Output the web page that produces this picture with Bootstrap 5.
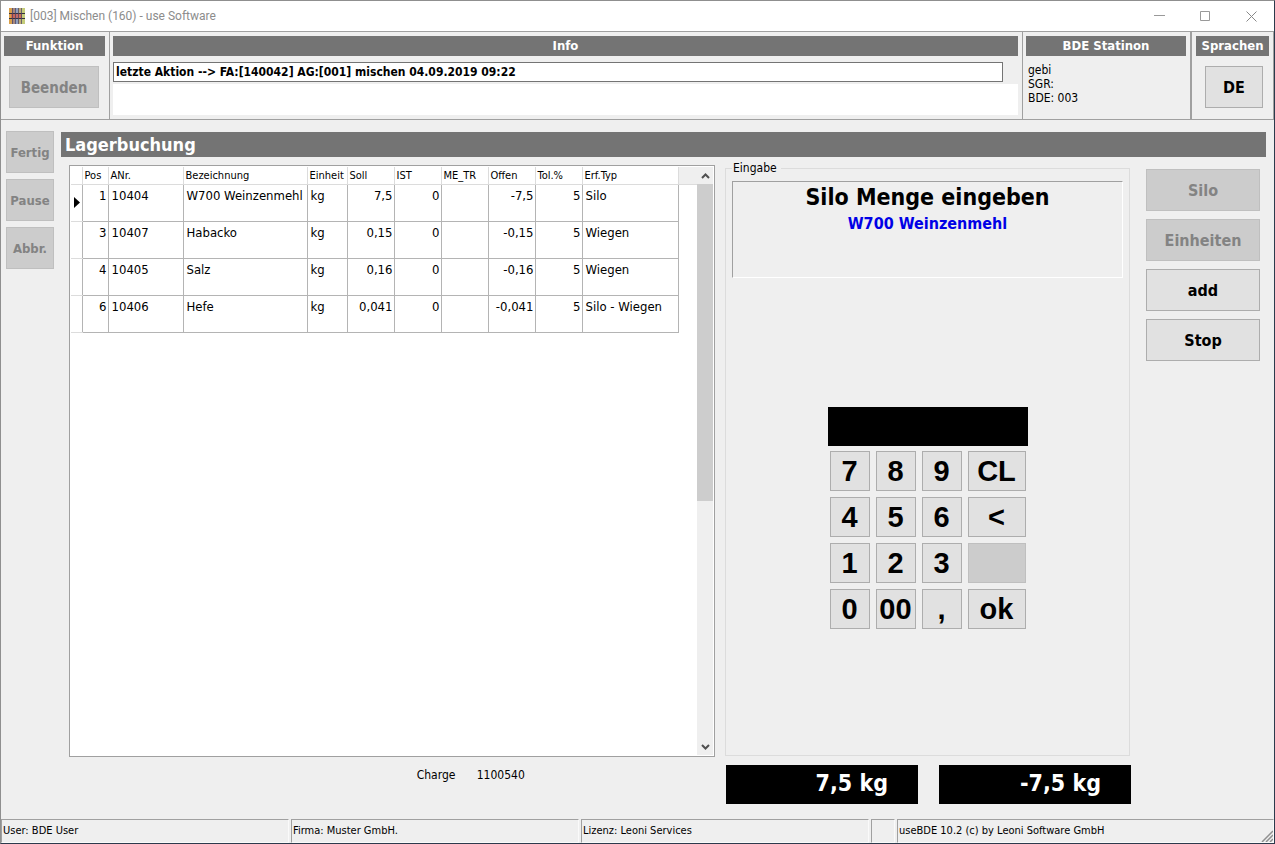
<!DOCTYPE html>
<html lang="de">
<head>
<meta charset="utf-8">
<meta name="viewport" content="width=device-width, initial-scale=1">
<title>[003] Mischen (160) - use Software</title>
<link href="https://cdn.jsdelivr.net/npm/bootstrap@5.3.0/dist/css/bootstrap.min.css" rel="stylesheet">
<style>
  body { font-family: "DejaVu Sans Condensed", "DejaVu Sans", sans-serif; font-size: 12px; line-height: 14px; color: #000; background: #efefef; }
  .app-window { border: 1px solid #8f8f8f; border-right-color: #2b3a4c; border-bottom-color: #2b3a4c; }
  .title-bar { height: 30px; background: #fff; color: #8c8c8c; font: 12px/16px Roboto, "Noto Sans", sans-serif; padding-left: 8px; }
  .title-text { margin-left: 5px; }
  .win-btn { width: 46px; height: 28px; }

  .top-band { display: grid; grid-template-columns: 109px minmax(0, 1fr) 169px 82px; border-top: 1px solid #a0a0a0; border-bottom: 1px solid #a0a0a0; }
  .top-cell { padding: 4px 4px 4px 3px; border-right: 1px solid #a0a0a0; }
  .top-cell.wide-rule { border-right-width: 2px; }
  .top-cell:last-child { padding-left: 4px; }
  .cap { background: #747474; color: #fff; font-weight: 700; font-size: 13px; line-height: 20px; text-align: center; }
  .key { background: #e1e1e1; border: 1px solid #adadad; border-radius: 0; color: #000; font-weight: 700; font-size: 16px; line-height: 20px; height: 42px; padding: 2px 0 0; }
  .key:hover { background: #e5f1fb; border-color: #0078d7; }
  .key:disabled { background: #ccc; border-color: #bfbfbf; color: #838383; opacity: 1; }
  .key-quit { width: 90px; margin: 10px 5px 7px; font-size: 15px; }
  .key-lang { width: 58px; margin: 10px 6px 7px auto; }
  .key-side { width: 48px; font-size: 13px; }
  .info-line { width: calc(100% - 15px); height: 20px; border: 1px solid #747474; color: #000; font-weight: 700; font-size: 12px; padding: 0 2px; margin-top: 6px; background: #fff; }
  .info-memo { height: 31px; border: 0; background: #fff; resize: none; margin-top: 2px; }
  .station { padding: 7px 2px 0; }

  .work { display: grid; grid-template-columns: 48px minmax(0, 1fr); column-gap: 7px; padding: 11px 8px 0 5px; }
  .side-keys { gap: 6px; }
  .heading { background: #747474; color: #fff; font-size: 18px; line-height: 25px; font-weight: 700; padding-left: 4px; margin: 1px 0 0; }
  .panes { display: grid; grid-template-columns: minmax(0, 1fr) 405px 130px; grid-template-rows: minmax(500px, 1fr) auto; padding: 8px 6px 0 8px; }
  .grid-box { background: #fff; border: 1px solid #a0a0a0; padding: 1px; margin-right: 10px; }
  .stock { border-collapse: collapse; table-layout: fixed; width: 607px; }
  .c-mark { width: 11px; } .c-pos { width: 26px; } .c-nr { width: 75px; } .c-name { width: 124px; }
  .c-unit { width: 40px; } .c-num { width: 47px; } .c-type { width: 96px; }
  .stock th { font-weight: 400; font-size: 11px; height: 17px; padding: 1px 0 0 2px; border: 1px solid #dcdcdc; border-top: 0; white-space: nowrap; }
  .stock td { height: 37px; padding: 4px 1px 0 3px; font-size: 13px; vertical-align: top; border: 1px solid #b4b4b4; white-space: nowrap; }
  .stock .mark-col { border-left: 0; border-top-color: #dcdcdc; border-bottom-color: #dcdcdc; padding: 12px 0 0 2px; }
  .stock th.mark-col { padding: 0; }
  .stock svg { display: block; }
  .head-fill { height: 18px; background: #efefef; border-bottom: 1px solid #dcdcdc; }
  .scroll { width: 16px; background: #efefef; }
  .scroll-btn { height: 17px; border: 0; background: transparent; padding: 0; }
  .scroll-track { padding-bottom: 237px; }
  .scroll-thumb { background: #cdcdcd; }

  .group { border: 1px solid #dcdcdc; margin: -4px 0 1px; padding: 0 6px; min-width: 0; }
  .group legend { float: none; width: auto; font-size: 12px; line-height: 14px; margin: 0; padding: 0 4px 0 1px; }
  .prompt { height: 97px; margin-top: 6px; border: 1px solid; border-color: #a0a0a0 #fff #fff #a0a0a0; text-align: center; }
  .prompt-title { font-size: 23px; line-height: 30px; font-weight: 700; margin: 0; }
  .prompt-item { font-size: 16px; line-height: 24px; font-weight: 700; color: #0000e6; }
  .pad { width: 200px; margin: 129px auto 0; }
  .pad-out { height: 39px; background: #000; color: #fff; border: 0; border-radius: 0; font-size: 24px; font-weight: 700; text-align: right; }
  .pad-keys { display: grid; grid-template-columns: repeat(3, 40px) 58px; gap: 6px; padding: 5px 2px; }
  .pad-keys .key { height: 40px; padding: 0; font-family: "Liberation Sans", Arial, sans-serif; font-size: 29px; line-height: 36px; }
  .pane-keys { gap: 8px; padding: 4px 0 0 16px; }
  .batch { padding: 11px 0 0 53%; }
  .batch-label { width: 60px; }
  .weights { padding: 8px 0 15px 1px; gap: 21px; }
  .weight { flex: 0 0 192px; background: #000; color: #fff; font-size: 23px; line-height: 37px; padding: 0 30px 2px 0; font-weight: 700; text-align: right; }

  .status { display: grid; grid-template-columns: repeat(3, 288px) 24px minmax(0, 1fr); column-gap: 2px; font-size: 11px; line-height: 22px; }
  .status > div { min-height: 24px; border: 1px solid; border-color: #a0a0a0 #fafafa #fafafa #a0a0a0; padding-left: 1px; white-space: nowrap; }
</style>
</head>
<body>
<div class="app-window d-flex flex-column min-vh-100">
  <header class="title-bar d-flex align-items-center">
    <svg width="16" height="16" viewBox="0 0 16 16" aria-hidden="true">
      <path d="M0 0h16v16H0z" fill="#b5a06a"/>
      <path d="M0 0h3v16H0z" fill="#d9a04a"/><path d="M3 0h3v16H3z" fill="#a5887e"/><path d="M6 0h3v16H6z" fill="#8f9fbc"/><path d="M9 0h3v16H9z" fill="#c0aa78"/><path d="M12 0h4v16h-4z" fill="#c4cc7a"/>
      <path d="M2 6h11v4H2z" fill="#d4574a" opacity=".7"/>
      <path d="M0 5.500h16M0 10.500h16" stroke="#37323c"/>
      <path d="M3.500 0v16M6.500 0v16M9.500 0v16M12.500 0v16" stroke="#4a4264" opacity=".75"/>
    </svg>
    <span class="title-text">[003] Mischen (160) - use Software</span>
    <div class="ms-auto d-flex">
      <button type="button" class="btn win-btn p-0 border-0 d-flex align-items-center justify-content-center" aria-label="Minimieren"><svg width="11" height="11"><path d="M0 4.500h11" stroke="#999"/></svg></button>
      <button type="button" class="btn win-btn p-0 border-0 d-flex align-items-center justify-content-center" aria-label="Maximieren"><svg width="11" height="11"><path d="M.5.5h9v9h-9z" fill="none" stroke="#999"/></svg></button>
      <button type="button" class="btn win-btn p-0 border-0 d-flex align-items-center justify-content-center" aria-label="Schließen"><svg width="11" height="11"><path d="M.5.5l10 10M10.500.5l-10 10" stroke="#888"/></svg></button>
    </div>
  </header>

  <section class="top-band">
    <div class="top-cell">
      <div class="cap">Funktion</div>
      <button type="button" class="btn key key-quit d-block" disabled>Beenden</button>
    </div>
    <div class="top-cell">
      <label class="cap d-block" for="info">Info</label>
      <input class="info-line d-block" id="info" type="text" value="letzte Aktion --&gt; FA:[140042] AG:[001] mischen 04.09.2019 09:22" readonly>
      <textarea class="info-memo d-block w-100" aria-label="Meldungen"></textarea>
    </div>
    <div class="top-cell wide-rule">
      <div class="cap">BDE Statinon</div>
      <div class="station">gebi<br>SGR:<br>BDE: 003</div>
    </div>
    <div class="top-cell">
      <div class="cap">Sprachen</div>
      <button type="button" class="btn key key-lang d-block">DE</button>
    </div>
  </section>

  <main class="work flex-grow-1">
    <nav class="side-keys d-flex flex-column" aria-label="Aktionen">
      <button type="button" class="btn key key-side" disabled>Fertig</button>
      <button type="button" class="btn key key-side" disabled>Pause</button>
      <button type="button" class="btn key key-side" disabled>Abbr.</button>
    </nav>
    <div class="d-flex flex-column">
      <h1 class="heading">Lagerbuchung</h1>
      <div class="panes flex-grow-1">
        <div class="grid-box d-flex">
          <div>
            <table class="stock">
              <colgroup><col class="c-mark"><col class="c-pos"><col class="c-nr"><col class="c-name"><col class="c-unit"><col class="c-num"><col class="c-num"><col class="c-num"><col class="c-num"><col class="c-num"><col class="c-type"></colgroup>
              <thead>
                <tr><th class="mark-col"></th><th>Pos</th><th>ANr.</th><th>Bezeichnung</th><th>Einheit</th><th>Soll</th><th>IST</th><th>ME_TR</th><th>Offen</th><th>Tol.%</th><th>Erf.Typ</th></tr>
              </thead>
              <tbody>
                <tr><td class="mark-col"><svg width="7" height="11" aria-label="Aktuelle Zeile"><path d="M1 0l6 5.500-6 5.500z"/></svg></td><td class="text-end">1</td><td>10404</td><td>W700 Weinzenmehl</td><td>kg</td><td class="text-end">7,5</td><td class="text-end">0</td><td></td><td class="text-end">-7,5</td><td class="text-end">5</td><td>Silo</td></tr>
                <tr><td class="mark-col"></td><td class="text-end">3</td><td>10407</td><td>Habacko</td><td>kg</td><td class="text-end">0,15</td><td class="text-end">0</td><td></td><td class="text-end">-0,15</td><td class="text-end">5</td><td>Wiegen</td></tr>
                <tr><td class="mark-col"></td><td class="text-end">4</td><td>10405</td><td>Salz</td><td>kg</td><td class="text-end">0,16</td><td class="text-end">0</td><td></td><td class="text-end">-0,16</td><td class="text-end">5</td><td>Wiegen</td></tr>
                <tr><td class="mark-col"></td><td class="text-end">6</td><td>10406</td><td>Hefe</td><td>kg</td><td class="text-end">0,041</td><td class="text-end">0</td><td></td><td class="text-end">-0,041</td><td class="text-end">5</td><td>Silo - Wiegen</td></tr>
              </tbody>
            </table>
          </div>
          <div class="head-fill flex-grow-1"></div>
          <div class="scroll d-flex flex-column">
            <button type="button" class="scroll-btn d-flex align-items-center justify-content-center" aria-label="Nach oben"><svg width="9" height="6"><path d="M1 5l3.500-3.500L8 5" fill="none" stroke="#505050" stroke-width="2"/></svg></button>
            <div class="scroll-track flex-grow-1 d-flex flex-column"><div class="scroll-thumb flex-grow-1"></div></div>
            <button type="button" class="scroll-btn d-flex align-items-center justify-content-center" aria-label="Nach unten"><svg width="9" height="6"><path d="M1 1l3.500 3.500L8 1" fill="none" stroke="#505050" stroke-width="2"/></svg></button>
          </div>
        </div>

        <fieldset class="group">
          <legend>Eingabe</legend>
          <div class="prompt">
            <h2 class="prompt-title">Silo Menge eingeben</h2>
            <div class="prompt-item">W700 Weinzenmehl</div>
          </div>
          <div class="pad">
            <input class="pad-out d-block w-100" type="text" aria-label="Menge">
            <div class="pad-keys">
              <button type="button" class="btn key">7</button><button type="button" class="btn key">8</button><button type="button" class="btn key">9</button><button type="button" class="btn key">CL</button>
              <button type="button" class="btn key">4</button><button type="button" class="btn key">5</button><button type="button" class="btn key">6</button><button type="button" class="btn key">&lt;</button>
              <button type="button" class="btn key">1</button><button type="button" class="btn key">2</button><button type="button" class="btn key">3</button><button type="button" class="btn key" aria-label="Nicht belegt" disabled></button>
              <button type="button" class="btn key">0</button><button type="button" class="btn key">00</button><button type="button" class="btn key">,</button><button type="button" class="btn key">ok</button>
            </div>
          </div>
        </fieldset>

        <div class="pane-keys d-flex flex-column">
          <button type="button" class="btn key" disabled>Silo</button>
          <button type="button" class="btn key" disabled>Einheiten</button>
          <button type="button" class="btn key">add</button>
          <button type="button" class="btn key">Stop</button>
        </div>

        <div class="batch d-flex"><span class="batch-label">Charge</span><span>1100540</span></div>
        <div class="weights d-flex">
          <div class="weight">7,5 kg</div>
          <div class="weight">-7,5 kg</div>
        </div>
      </div>
    </div>
  </main>

  <footer class="status">
    <div>User: BDE User</div>
    <div>Firma: Muster GmbH.</div>
    <div>Lizenz: Leoni Services</div>
    <div></div>
    <div class="d-flex justify-content-between align-items-end">useBDE 10.2 (c) by Leoni Software GmbH<svg width="12" height="12" aria-hidden="true"><path d="M1 12L12 1M5 12l7-7M9 12l3-3" stroke="#909090" stroke-width="1.500"/></svg></div>
  </footer>
</div>
<script src="https://cdn.jsdelivr.net/npm/bootstrap@5.3.0/dist/js/bootstrap.bundle.min.js"></script>
</body>
</html>
